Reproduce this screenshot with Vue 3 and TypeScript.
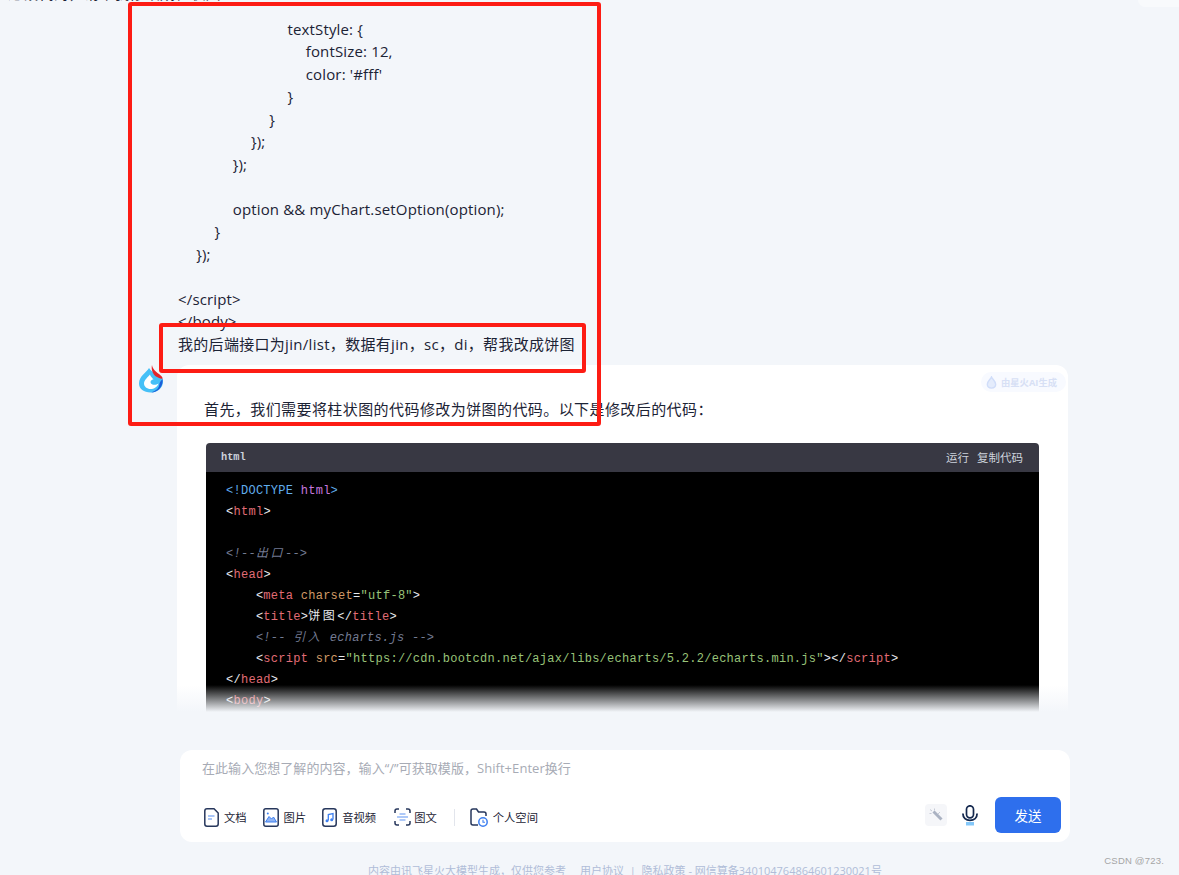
<script setup lang="ts">
interface Tok { t: string; c?: string }
const closeScript = '</' + 'script>'
const userLines: { n: number; t: string }[] = [
  { n: 6, t: 'textStyle: {' },
  { n: 7, t: 'fontSize: 12,' },
  { n: 7, t: "color: '#fff'" },
  { n: 6, t: '}' },
  { n: 5, t: '}' },
  { n: 4, t: '});' },
  { n: 3, t: '});' },
  { n: 0, t: '' },
  { n: 3, t: 'option && myChart.setOption(option);' },
  { n: 2, t: '}' },
  { n: 1, t: '});' },
  { n: 0, t: '' },
  { n: 0, t: closeScript },
  { n: 0, t: '</body>' },
]
const code: Tok[][] = [
  [{ t: '<!DOCTYPE ', c: 'b' }, { t: 'html', c: 'p' }, { t: '>', c: 'b' }],
  [{ t: '<' }, { t: 'html', c: 'r' }, { t: '>' }],
  [{ t: ' ' }],
  [{ t: '<!--', c: 'g' }, { t: '出口', c: 'g zh' }, { t: '-->', c: 'g' }],
  [{ t: '<' }, { t: 'head', c: 'r' }, { t: '>' }],
  [{ t: '    <' }, { t: 'meta', c: 'r' }, { t: ' ' }, { t: 'charset', c: 'o' }, { t: '=' }, { t: '"utf-8"', c: 'v' }, { t: '>' }],
  [{ t: '    <' }, { t: 'title', c: 'r' }, { t: '>' }, { t: '饼图', c: 'zh' }, { t: '</' }, { t: 'title', c: 'r' }, { t: '>' }],
  [{ t: '    ' }, { t: '<!-- ', c: 'g' }, { t: '引入', c: 'g zh' }, { t: ' echarts.js -->', c: 'g' }],
  [{ t: '    <' }, { t: 'script', c: 'r' }, { t: ' ' }, { t: 'src', c: 'o' }, { t: '=' }, { t: '"https://cdn.bootcdn.net/ajax/libs/echarts/5.2.2/echarts.min.js"', c: 'v' }, { t: '></' }, { t: 'script', c: 'r' }, { t: '>' }],
  [{ t: '</' }, { t: 'head', c: 'r' }, { t: '>' }],
  [{ t: '<' }, { t: 'body', c: 'r' }, { t: '>' }],
]
</script>

<template>
  <div class="page">
    <main class="chat">
      <div class="strip">
        <div class="prev"><span>这段代码，请帮我修改成柱状图</span></div>
        <div class="prev-card"></div>
      </div>
      <div class="user-code">
        <div v-for="(l, i) in userLines" :key="i" class="u-line" :style="{ paddingLeft: l.n * 18.25 + 'px' }">{{ l.t || '\u00a0' }}</div>
      </div>
      <div class="user-ask">我的后端接口为jin/list，数据有jin，sc，di，帮我改成饼图</div>
      <section class="card">
        <svg class="logo" viewBox="0 0 24 28" width="24" height="28">
          <path d="M10 3C8 7 0 11 0 18.500C0 24 5 27.500 11.500 27.500C18.500 27.500 24 23 24 16.500C24 15 23.500 13.500 22.800 12.500C21 10 13 8 10 3Z" fill="#45c0f7" />
          <path d="M11 9.500C9 12 5 15 5 18.500C5 21.500 8 24 11.500 24C15 24 18.500 22 19.500 18.500C17.500 20 13.500 20.500 12 18.500C10.800 16.500 12.500 14.500 14.500 14.500C13 12.800 11.500 11.500 11 9.500Z" fill="#fff" />
          <path d="M23.500 14C24.500 19 21 27.300 12 27.500C17.500 25.500 20 23.500 20.500 18.500C21 16.500 22.500 15.500 23.500 14Z" fill="#1d5ed8" />
          <path d="M13 0C13.500 4 17 7 20 9C22 10.500 23.500 12 23.800 13.500C22 14 19.500 13 17 11.500C13.500 9 12 4 13 0Z" fill="#e3242b" />
        </svg>
        <div class="badge">
          <svg viewBox="0 0 14 14" width="13" height="13"><path d="M7 1C6 3.500 2.500 5.500 2.500 9C2.500 11.500 4.500 13 7 13C9.500 13 11.500 11.500 11.500 9C11.500 5.500 8 3.500 7 1Z" fill="#e4ecfc" stroke="#d0ddf9" stroke-width="1.500" /></svg>
          <span>由星火AI生成</span>
        </div>
        <p class="lead">首先，我们需要将柱状图的代码修改为饼图的代码。以下是修改后的代码：</p>
        <div class="code">
          <div class="code-head">
            <b>html</b>
            <div class="code-acts"><span>运行</span><span>复制代码</span></div>
          </div>
          <div class="code-body">
            <div v-for="(l, i) in code" :key="i" class="c-line"><span v-for="(k, j) in l" :key="j" :class="k.c">{{ k.t }}</span></div>
          </div>
        </div>
      </section>
      <div class="fade"></div>
    </main>

    <div class="input">
      <div class="ph">在此输入您想了解的内容，输入“/”可获取模版，Shift+Enter换行</div>
      <div class="bar">
        <div class="tools">
          <div class="tool t16">
            <svg viewBox="0 0 15 19" width="15" height="19"><path d="M3 .8H10L14.200 5V16A2.200 2.200 0 0 1 12 18.200H3A2.200 2.200 0 0 1 .8 16V3A2.200 2.200 0 0 1 3 .8Z" fill="none" stroke="#27375c" stroke-width="1.500" /><path d="M4 8H10.500M4 11H8" stroke="#8fb4f5" stroke-width="1.300" /></svg>
            <span>文档</span>
          </div>
          <div class="tool t16">
            <svg viewBox="0 0 16 19" width="16" height="19"><rect x=".8" y=".8" width="14.400" height="17.400" rx="2" fill="none" stroke="#27375c" stroke-width="1.500" /><path d="M2.500 14L6 8.500L8.500 11L10.500 9L13.500 14Z" fill="#8fb4f5" stroke="#3d7ff0" /><circle cx="4.800" cy="5.500" r="1" fill="#3d7ff0" /></svg>
            <span>图片</span>
          </div>
          <div class="tool t18">
            <svg viewBox="0 0 15 19" width="15" height="19"><rect x=".8" y=".8" width="13.400" height="17.400" rx="2.500" fill="none" stroke="#27375c" stroke-width="1.500" /><path d="M6.300 12.500V6.500L11 5.500V11.500" fill="none" stroke="#3d7ff0" stroke-width="1.300" /><circle cx="5" cy="12.700" r="1.500" fill="#3d7ff0" /><circle cx="9.700" cy="11.700" r="1.500" fill="#3d7ff0" /></svg>
            <span>音视频</span>
          </div>
          <div class="tool t17 tight">
            <svg viewBox="0 0 17 18" width="17" height="18"><path d="M1 5V3A2 2 0 0 1 3 1H5M12 1H14A2 2 0 0 1 16 3V5M16 13V15A2 2 0 0 1 14 17H12M5 17H3A2 2 0 0 1 1 15V13" fill="none" stroke="#27375c" stroke-width="1.500" /><path d="M5.500 6H11.500M3 9H14M5.500 12H11.500" stroke="#5f94f2" stroke-width="1.200" /></svg>
            <span>图文</span>
          </div>
          <i class="sep"></i>
          <div class="tool">
            <svg viewBox="0 0 18 19" width="18" height="19"><path d="M8 17H3A2 2 0 0 1 1 15V3A2 2 0 0 1 3 1H6.500L8.500 4H14A2 2 0 0 1 16 6V8" fill="none" stroke="#27375c" stroke-width="1.500" /><circle cx="13" cy="14" r="4.200" fill="#fff" stroke="#3d7ff0" stroke-width="1.500" /><path d="M13 11.800V14.300H15" fill="none" stroke="#3d7ff0" stroke-width="1.100" /></svg>
            <span>个人空间</span>
          </div>
        </div>
        <div class="right">
          <div class="wand">
            <svg viewBox="0 0 14 14" width="14" height="14"><path d="M4.500 3.500L12.500 11.500" stroke="#aab2c2" stroke-width="3" /><path d="M1 1.500L3 3M5.500.5V2.500M.5 5.500H2.500M9 6L11 4" stroke="#c6cbd6" stroke-width="1" /></svg>
          </div>
          <svg class="mic" viewBox="0 0 16 21" width="16" height="21"><rect x="4.500" y=".8" width="7" height="12" rx="3.500" fill="none" stroke="#14284e" stroke-width="1.700" /><path d="M.9 8.500C.9 13 4 15.300 8 15.300C12 15.300 15.100 13 15.100 8.500" fill="none" stroke="#14284e" stroke-width="1.800" /><rect x="4" y="17" width="8" height="3.500" fill="#83c7f9" /></svg>
          <button class="send">发送</button>
        </div>
      </div>
    </div>

    <footer class="foot"><span>内容由讯飞星火大模型生成，仅供您参考</span><span>用户协议 &nbsp;|&nbsp; 隐私政策 - 网信算备340104764864601230021号</span></footer>

    <div class="mark">CSDN @723.</div>
    <div class="red outer"></div>
    <div class="red inner"></div>
  </div>
</template>

<style>
html, body { margin: 0; background: #f3f6fa; overflow: hidden; }
</style>

<style scoped>
.page {
  position: relative;
  width: 1179px;
  height: 875px;
  overflow: hidden;
  background: #f3f6fa;
  font-family: "Open Sans", "Noto Sans CJK SC", sans-serif;
  color: #1c2335;
  display: flex;
  flex-direction: column;
}
.chat { position: relative; height: 712px; overflow: hidden; flex: none; }
.strip { display: flex; justify-content: space-between; height: 17.500px; }
.prev { height: 2px; margin-left: 8px; overflow: hidden; display: flex; align-items: flex-end; font-size: 15px; letter-spacing: .2px; line-height: 18px; }
.prev span { flex: none; }
.prev-card { width: 41px; height: 7px; background: #f8fafc; border-bottom-left-radius: 8px; }
.user-code { margin-left: 178px; font-size: 15px; letter-spacing: .15px; line-height: 22.500px; }
.u-line { white-space: pre; height: 22.500px; }
.user-ask { margin-left: 178px; font-size: 15px; letter-spacing: .3px; line-height: 22.500px; height: 32.500px; }
.card {
  position: relative;
  margin-left: 177px;
  width: 891px;
  box-sizing: border-box;
  height: 400px;
  background: #fff;
  border-radius: 12px;
  padding: 33px 29px 0 27px;
}
.logo { position: absolute; left: -38px; top: 0; }
.badge {
  position: absolute; top: 7px; right: 2px; width: 85px; height: 20px; box-sizing: border-box;
  display: flex; align-items: center; gap: 3px; padding-left: 4px;
  background: #f8faff; border-radius: 10px; color: #d7e0f5; font-size: 9.300px; font-weight: 700;
}
.lead { margin: 0; font-size: 15px; letter-spacing: .42px; line-height: 22px; }
.code { margin: 23px 0 0 2px; border-radius: 4px 4px 0 0; overflow: hidden; }
.code-head {
  height: 29px; background: #383843; display: flex; align-items: center; justify-content: space-between;
  padding: 0 16px 2px 15px; box-sizing: border-box; color: #cdd3dc;
}
.code-head b { font-family: "Liberation Mono", monospace; font-size: 10.300px; }
.code-acts { display: flex; gap: 8px; font-size: 11.500px; }
.code-body {
  background: #000; color: #e8eaee; padding: 9px 20px 20px; height: 300px;
  font-family: "Liberation Mono", "Noto Sans CJK SC", monospace; font-size: 12px; letter-spacing: .27px; line-height: 21px;
}
.c-line { white-space: pre; height: 21px; }
.b { color: #61aeee; }
.p { color: #c678dd; }
.r { color: #e06c75; }
.o { color: #d19a66; }
.v { color: #98c379; }
.g { color: #737b92; font-style: italic; }
.zh { letter-spacing: 2.500px; }
.fade {
  position: absolute; left: 0; right: 0; bottom: 0; height: 27px;
  background: linear-gradient(to bottom, rgba(243, 246, 250, 0), #f3f6fa);
}
.input {
  flex: none;
  margin: 38px 0 0 180px;
  width: 890px; height: 92px; box-sizing: border-box;
  background: #fff; border-radius: 12px;
  padding: 9px 9px 9px 22px;
  display: flex; flex-direction: column; justify-content: space-between;
}
.ph { font-size: 13px; letter-spacing: .05px; line-height: 18px; color: #a7abb5; }
.bar { display: flex; align-items: center; justify-content: space-between; height: 36px; padding-left: 2px; }
.tools { display: flex; align-items: center; padding-top: 4px; font-size: 11.300px; color: #1c2335; }
.tool { display: flex; align-items: center; gap: 5px; }
.tool.tight { gap: 3px; }
.t16 { margin-right: 16px; }
.t17 { margin-right: 17px; }
.t18 { margin-right: 18px; }
.sep { width: 1px; height: 17px; background: #e2e5ec; margin-right: 15px; }
.right { display: flex; align-items: center; }
.wand {
  width: 22px; height: 22px; background: #f5f6f9; border-radius: 4px;
  display: flex; align-items: center; justify-content: center; margin-right: 15px;
}
.mic { margin-right: 17px; }
.send {
  width: 66px; height: 36px; border: 0; border-radius: 6px; background: #2e6fed; color: #fff;
  font-family: inherit; font-size: 13.500px; padding: 0;
}
.foot {
  flex: none;
  margin: 20px 0 0 180px; width: 890px;
  display: flex; justify-content: center; gap: 14px;
  font-size: 11px; line-height: 17px; color: #b0bdd8; white-space: nowrap;
}
.mark {
  position: absolute; right: 15px; top: 854px; font-family: "Liberation Sans", sans-serif;
  font-size: 9.500px; line-height: 14px; color: #a5a5a5; letter-spacing: .2px;
}
.red { position: absolute; border: 4px solid #fd1c14; border-radius: 3px; box-sizing: border-box; pointer-events: none; }
.outer { left: 128px; top: 2px; width: 473px; height: 424px; }
.inner { left: 159px; top: 323px; width: 427px; height: 50px; }
</style>
